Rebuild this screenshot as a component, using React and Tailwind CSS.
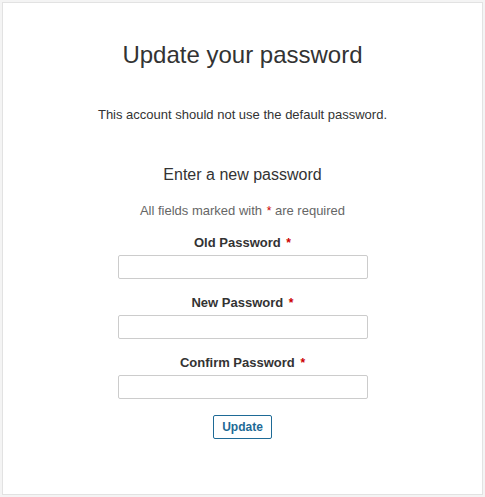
import React from 'react'

const fields = ['Old Password', 'New Password', 'Confirm Password']

function Field({ label, first }) {
  return (
    <div className={`flex flex-col items-center ${first ? 'mt-[13px]' : 'mt-[14px]'}`}>
      <label className="text-[13px] leading-[20px] font-bold text-[#333]">
        {label} <span className="text-[#c00] text-[12px] ml-[2px]">*</span>
      </label>
      <input
        type="password"
        className="mt-[2px] w-[250px] h-[24px] border border-[#ccc] rounded-[2px] bg-white px-2 text-[13px] outline-none"
      />
    </div>
  )
}

export default function App() {
  return (
    <div className="w-[485px] h-[497px] bg-[#f4f4f4] p-[2px]" style={{ fontFamily: '"Liberation Sans", Arial, sans-serif' }}>
      <div className="h-full bg-white border border-[#e2e2e2] flex flex-col items-center pt-[38px]">
        <h1 className="text-[24px] leading-[28px] text-[#333]">Update your password</h1>
        <p className="mt-[37px] text-[13px] leading-[18px] text-[#333]">
          This account should not use the default password.
        </p>

        <h2 className="mt-[41px] text-[16px] leading-[20px] text-[#333]">Enter a new password</h2>
        <p className="mt-[17px] text-[13px] leading-[18px] text-[#666]">
          All fields marked with <span className="text-[#c00] text-[12px] ml-[1px]">*</span> are required
        </p>

        {fields.map((f, i) => (
          <Field key={f} label={f} first={i === 0} />
        ))}

        <button className="mt-[16px] h-[24px] px-[8px] border border-[#1e6a96] rounded-[2px] text-[12px] font-bold text-[#1e6a96] bg-white">
          Update
        </button>
      </div>
    </div>
  )
}
